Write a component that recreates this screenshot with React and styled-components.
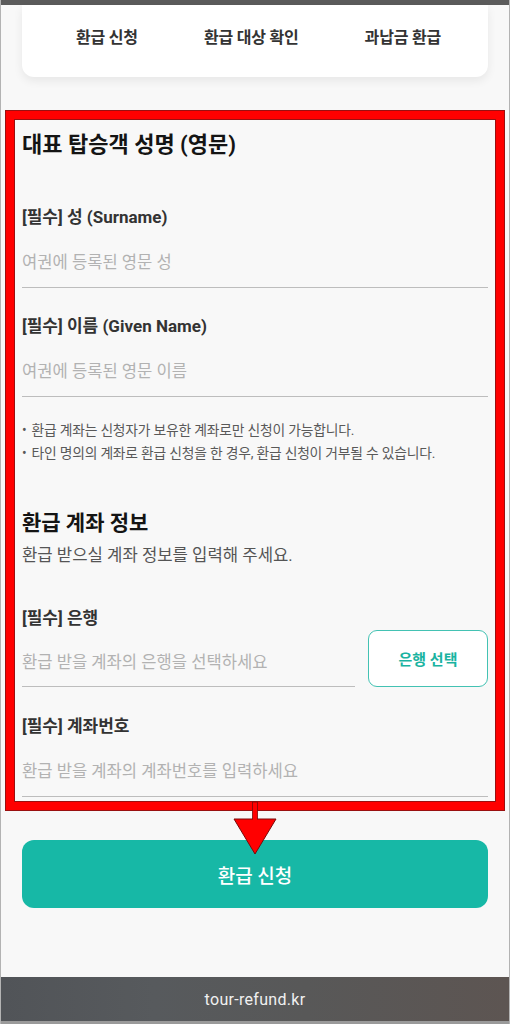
import React from 'react';
import styled, { createGlobalStyle } from 'styled-components';

const GlobalStyle = createGlobalStyle`
  html, body {
    margin: 0;
    padding: 0;
    background: #f8f8f8;
  }
  * {
    box-sizing: border-box;
  }
  body {
    font-family: Roboto, "Noto Sans CJK KR", sans-serif;
  }
`;

const Page = styled.div`
  width: 510px;
  height: 1024px;
  display: flex;
  flex-direction: column;
  background: #f8f8f8;
  border-left: 1px solid #b3b3b3;
  border-right: 1px solid #b3b3b3;
  overflow: hidden;
`;

const TopStrip = styled.div`
  height: 5px;
  flex-shrink: 0;
  background: #5b5b5b;
`;

const TabCard = styled.nav`
  height: 72px;
  margin: 0 21px;
  flex-shrink: 0;
  display: flex;
  align-items: center;
  justify-content: space-between;
  padding: 0 47px 10px 54px;
  background: #fff;
  border-radius: 0 0 12px 12px;
  box-shadow: 0 4px 10px rgba(0, 0, 0, 0.07);
`;

const Tab = styled.span`
  font-size: 16px;
  font-weight: 700;
  color: #333;
  letter-spacing: -0.2px;
`;

const Highlight = styled.section`
  position: relative;
  margin: 34px 5px 0;
  border: 8px solid #ff0000;
  box-shadow: 0 0 0 1px #9a1010, inset 0 0 0 1px #9a1010;
  padding: 14px 8px 5px;
  background: #f8f8f8;
`;

const SectionTitle = styled.h2`
  margin: ${({ $top }) => $top || 0}px 0 0;
  font-size: ${({ $size }) => $size || 21}px;
  line-height: 24px;
  font-weight: 700;
  color: #141414;
`;

const SubText = styled.p`
  margin: 9px 0 0;
  font-size: 16.7px;
  line-height: 24px;
  color: #555;
`;

const Field = styled.div`
  margin-top: ${({ $top }) => $top}px;
`;

const Label = styled.div`
  font-size: 17px;
  line-height: 22px;
  font-weight: 700;
  color: #333;
  margin-bottom: 8px;
`;

const Input = styled.input`
  display: block;
  width: 100%;
  height: 52px;
  padding: 1px 0 0;
  border: none;
  border-bottom: 1.5px solid #bdbdbd;
  background: transparent;
  font-family: inherit;
  font-size: 16.6px;
  color: #333;
  outline: none;

  &::placeholder {
    color: #b2b2b2;
  }
`;

const BankRow = styled.div`
  display: flex;
  align-items: flex-end;
  gap: 13px;

  ${Input} {
    flex: 1;
    height: 50px;
  }
`;

const BankButton = styled.button`
  width: 120px;
  height: 57px;
  margin-top: -7px;
  flex-shrink: 0;
  border: 1.5px solid #43c2b3;
  border-radius: 9px;
  background: #fff;
  color: #1ab3a1;
  font-family: inherit;
  font-size: 15px;
  font-weight: 700;
`;

const Notes = styled.ul`
  margin: 22px 0 0;
  padding: 0;
  list-style: none;
`;

const Note = styled.li`
  font-size: 13.8px;
  line-height: 23px;
  color: #595959;
  letter-spacing: -0.2px;

  &::before {
    content: '•';
    margin-right: 5px;
  }
`;

const Arrow = styled.svg`
  position: absolute;
  top: 100%;
  left: 50%;
  transform: translateX(-50%);
  z-index: 2;
  overflow: visible;
`;

const SubmitButton = styled.button`
  height: 68px;
  margin: 30px 21px 0;
  flex-shrink: 0;
  border: none;
  border-radius: 12px;
  background: #17b8a6;
  color: #fff;
  font-family: inherit;
  font-size: 19px;
  font-weight: 500;
`;

const Spacer = styled.div`
  flex: 1;
`;

const UrlBar = styled.footer`
  height: 47px;
  flex-shrink: 0;
  display: flex;
  align-items: center;
  justify-content: center;
  background: linear-gradient(90deg, #515458 0%, #575a5d 30%, #585858 60%, #5d5552 100%);
  color: #f0f0f0;
  font-size: 16px;
  letter-spacing: 0.3px;
  border-bottom: 3px solid #9a9a9a;
`;

export default function App() {
  return (
    <>
      <GlobalStyle />
      <Page>
        <TopStrip />
        <TabCard>
          <Tab>환급 신청</Tab>
          <Tab>환급 대상 확인</Tab>
          <Tab>과납금 환급</Tab>
        </TabCard>

        <Highlight>
          <SectionTitle $size={22}>대표 탑승객 성명 (영문)</SectionTitle>

          <Field $top={49}>
            <Label>[필수] 성 (Surname)</Label>
            <Input placeholder="여권에 등록된 영문 성" />
          </Field>

          <Field $top={27}>
            <Label>[필수] 이름 (Given Name)</Label>
            <Input placeholder="여권에 등록된 영문 이름" />
          </Field>

          <Notes>
            <Note>환급 계좌는 신청자가 보유한 계좌로만 신청이 가능합니다.</Note>
            <Note>타인 명의의 계좌로 환급 신청을 한 경우, 환급 신청이 거부될 수 있습니다.</Note>
          </Notes>

          <SectionTitle $top={46}>환급 계좌 정보</SectionTitle>
          <SubText>환급 받으실 계좌 정보를 입력해 주세요.</SubText>

          <Field $top={39}>
            <Label>[필수] 은행</Label>
            <BankRow>
              <Input placeholder="환급 받을 계좌의 은행을 선택하세요" />
              <BankButton>은행 선택</BankButton>
            </BankRow>
          </Field>

          <Field $top={28}>
            <Label>[필수] 계좌번호</Label>
            <Input placeholder="환급 받을 계좌의 계좌번호를 입력하세요" />
          </Field>

          <Arrow width="44" height="54" viewBox="0 0 44 54">
            <rect x="19.5" y="0" width="5" height="19" fill="#ff0000" stroke="#7a0a0a" strokeWidth="0.8" />
            <polygon points="1,17 43,17 22,52" fill="#ff0000" stroke="#7a0a0a" strokeWidth="1" strokeLinejoin="miter" />
            <rect x="20" y="10" width="4" height="8" fill="#ff0000" />
          </Arrow>
        </Highlight>

        <SubmitButton>환급 신청</SubmitButton>
        <Spacer />
        <UrlBar>tour-refund.kr</UrlBar>
      </Page>
    </>
  );
}
